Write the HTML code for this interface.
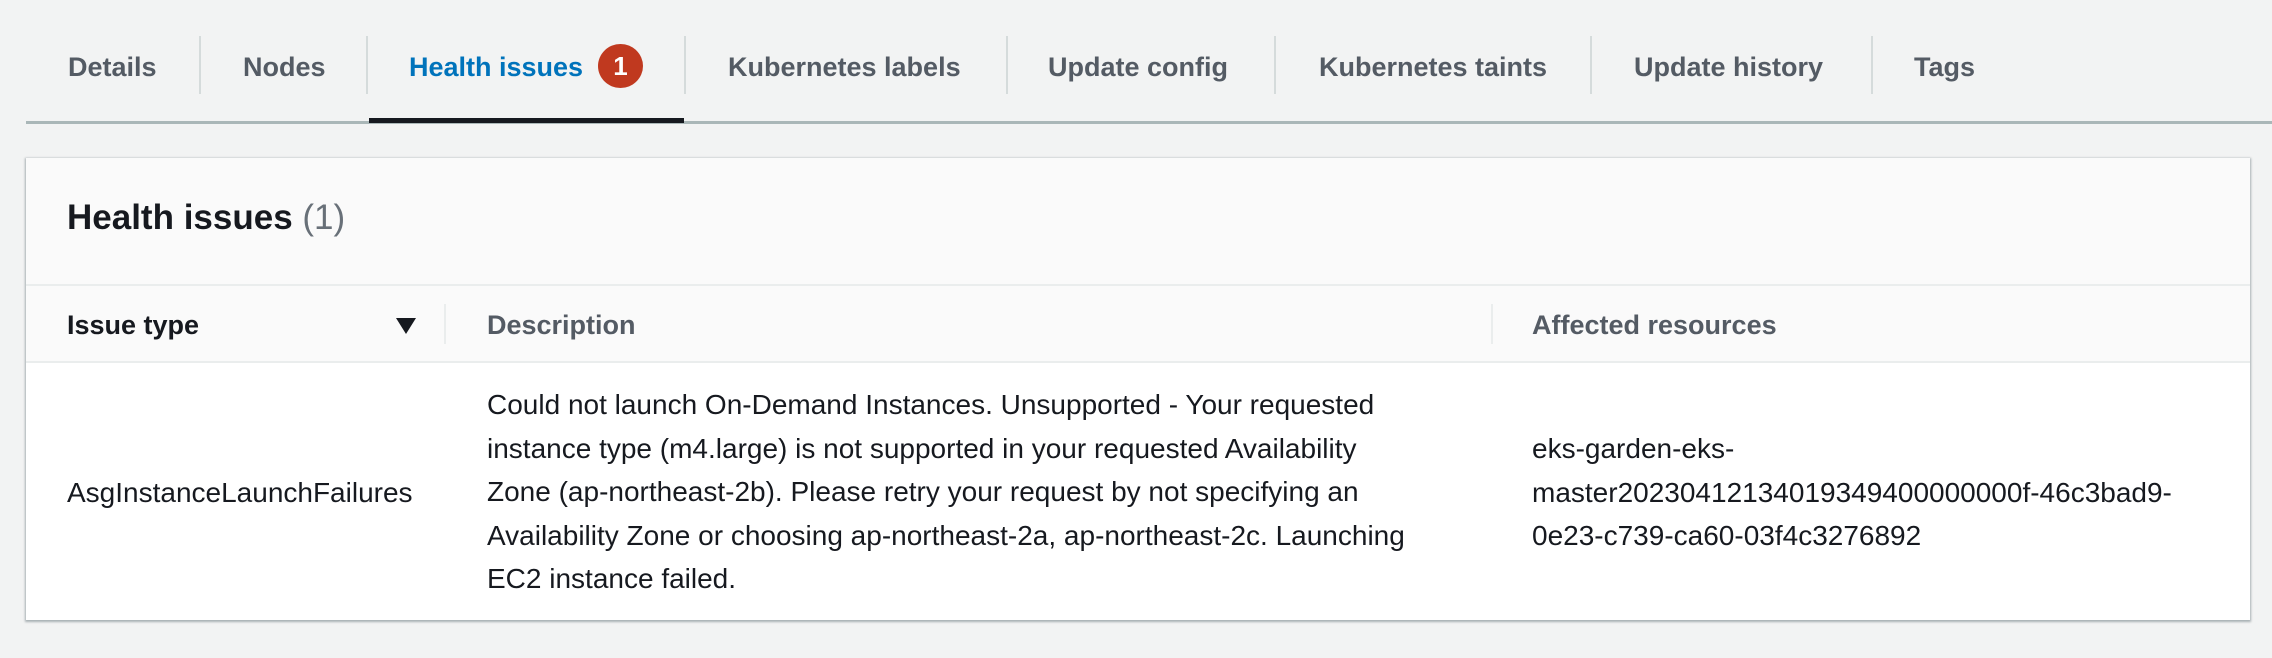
<!DOCTYPE html>
<html><head><meta charset="utf-8"><style>
body{margin:0;width:2272px;height:658px;background:#f2f3f3;font-family:"Liberation Sans",sans-serif;position:relative;overflow:hidden}
.a{position:absolute;white-space:nowrap}
.tab{top:50px;font-size:27px;font-weight:bold;color:#545b64;line-height:34px}
.div{position:absolute;top:36px;width:2px;height:58px;background:#d5dbdb}
.b{font-size:28px;color:#16191f;line-height:43.5px}
.h{font-size:27px;font-weight:bold;color:#545b64;top:308px;line-height:34px}
</style></head><body>
<div class="a tab" style="left:68px">Details</div>
<div class="div" style="left:199px"></div>
<div class="a tab" style="left:243px">Nodes</div>
<div class="div" style="left:366px"></div>
<div class="a tab" style="left:409px;color:#0073bb">Health issues</div>
<div class="a" style="left:598px;top:44px;width:45px;height:44px;border-radius:50%;background:#c0391f;color:#fff;font-size:26px;font-weight:bold;text-align:center;line-height:44px">1</div>
<div class="div" style="left:684px"></div>
<div class="a tab" style="left:728px">Kubernetes labels</div>
<div class="div" style="left:1006px"></div>
<div class="a tab" style="left:1048px">Update config</div>
<div class="div" style="left:1274px"></div>
<div class="a tab" style="left:1319px">Kubernetes taints</div>
<div class="div" style="left:1590px"></div>
<div class="a tab" style="left:1634px">Update history</div>
<div class="div" style="left:1871px"></div>
<div class="a tab" style="left:1914px">Tags</div>
<div class="a" style="left:26px;top:121px;width:2246px;height:3px;background:#aab7b8"></div>
<div class="a" style="left:369px;top:118px;width:315px;height:5px;background:#16191f"></div>

<div class="a" style="left:26px;top:158px;width:2224px;height:462px;background:#fff;box-shadow:0 1px 2px 1px rgba(0,28,36,.3)"></div>
<div class="a" style="left:26px;top:158px;width:2224px;height:126px;background:#fafafa;border-bottom:2px solid #eaeded"></div>
<div class="a" style="left:67px;top:198px;font-size:35px;font-weight:bold;color:#16191f">Health issues <span style="font-weight:normal;color:#687078">(1)</span></div>
<div class="a" style="left:26px;top:286px;width:2224px;height:75px;background:#fafafa;border-bottom:2px solid #eaeded"></div>
<div class="a h" style="left:67px;color:#16191f">Issue type</div>
<div class="a" style="left:396px;top:318px;width:0;height:0;border-left:10px solid transparent;border-right:10px solid transparent;border-top:16px solid #16191f"></div>
<div class="a" style="left:444px;top:304px;width:2px;height:40px;background:#eaeded"></div>
<div class="a h" style="left:487px">Description</div>
<div class="a" style="left:1491px;top:304px;width:2px;height:40px;background:#eaeded"></div>
<div class="a h" style="left:1532px">Affected resources</div>

<div class="a b" style="left:67px;top:471px">AsgInstanceLaunchFailures</div>
<div class="a b" style="left:487px;top:383px">Could not launch On-Demand Instances. Unsupported - Your requested<br>instance type (m4.large) is not supported in your requested Availability<br>Zone (ap-northeast-2b). Please retry your request by not specifying an<br>Availability Zone or choosing ap-northeast-2a, ap-northeast-2c. Launching<br>EC2 instance failed.</div>
<div class="a b" style="left:1532px;top:427px">eks-garden-eks-<br>master20230412134019349400000000f-46c3bad9-<br>0e23-c739-ca60-03f4c3276892</div>
</body></html>
